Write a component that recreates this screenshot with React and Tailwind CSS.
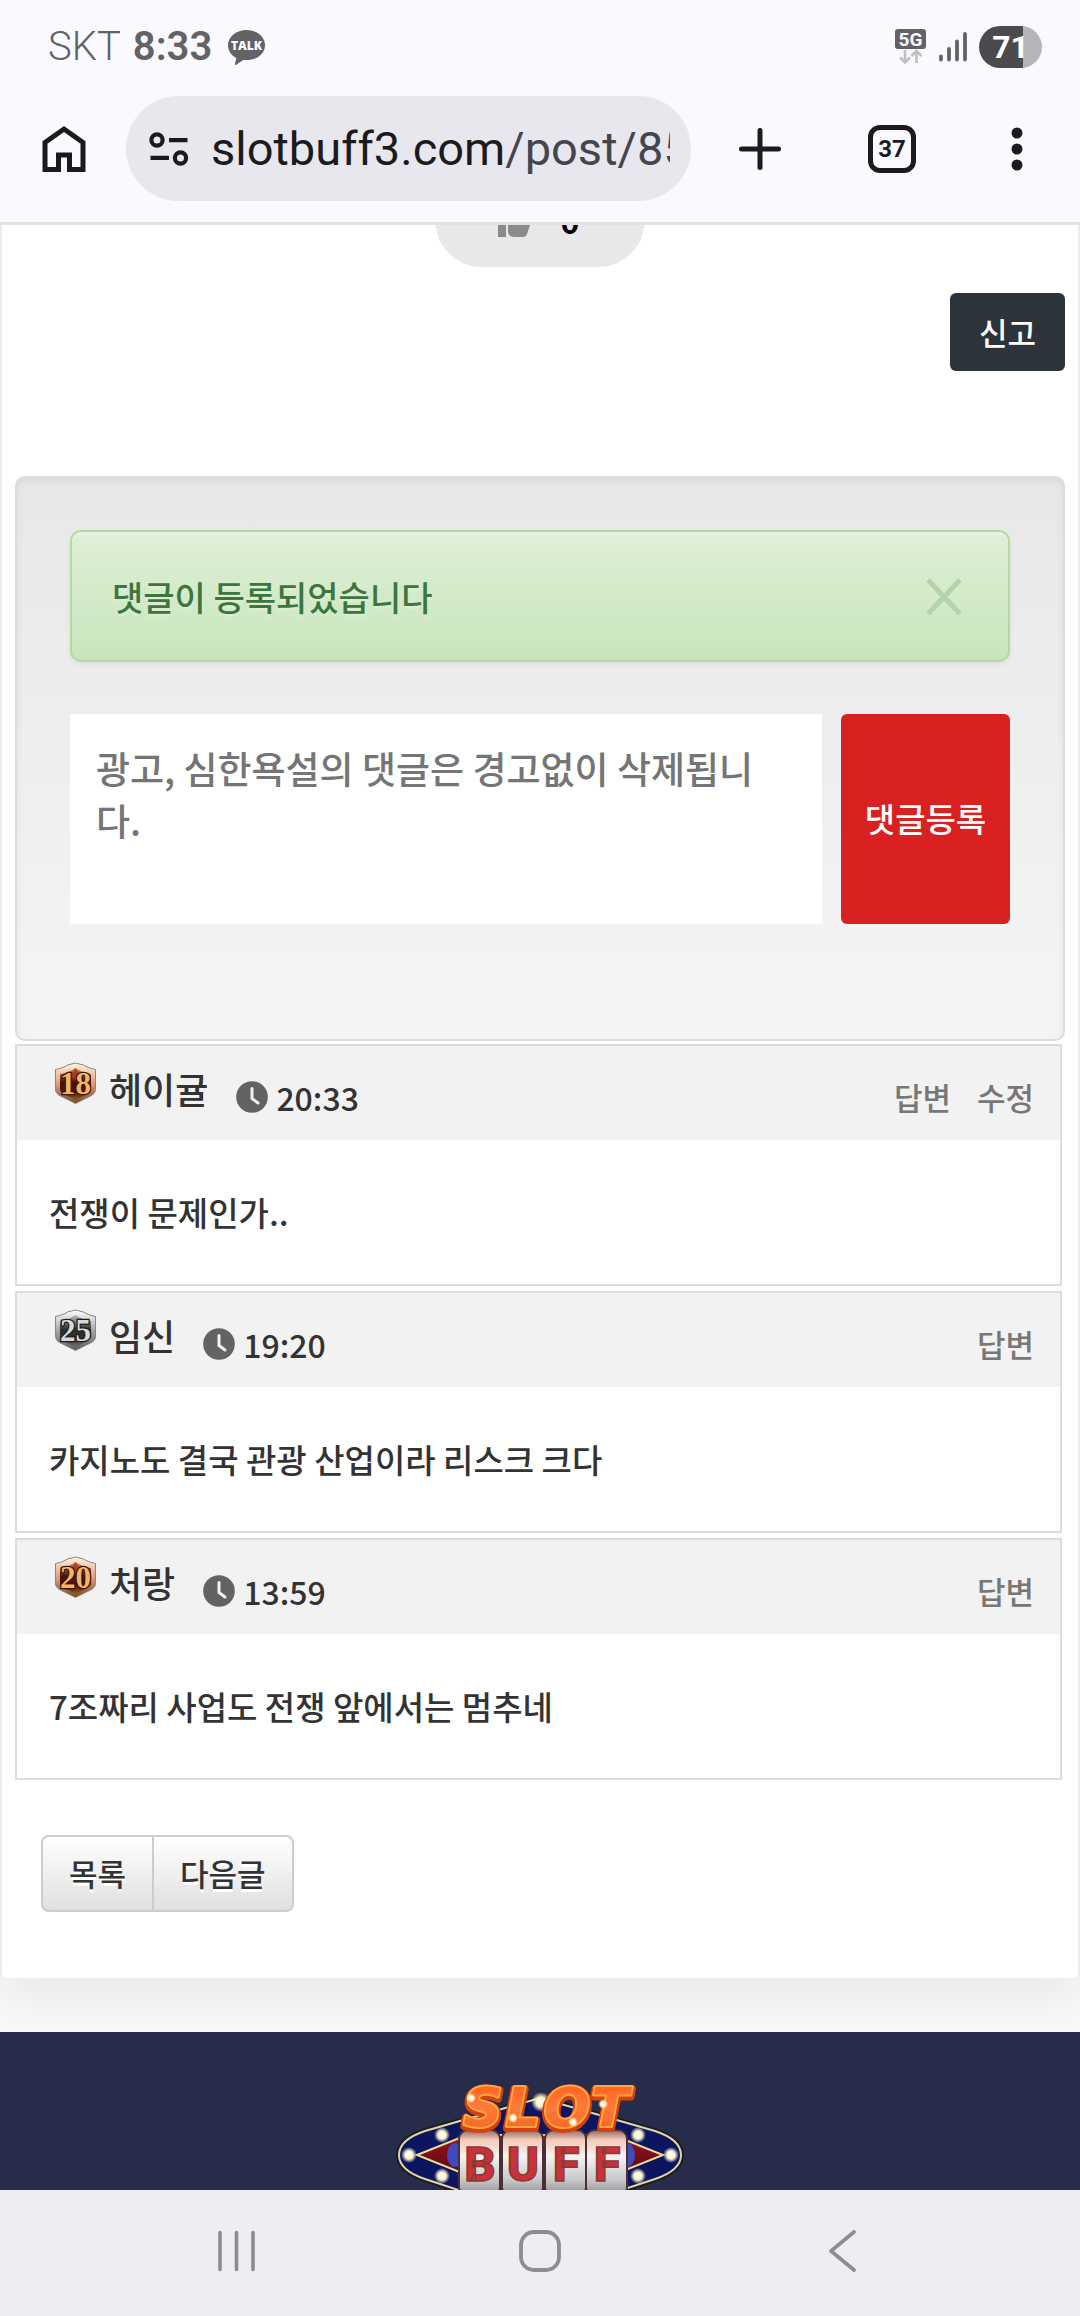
import { useState } from "react";

const comments = [
  {
    id: 1,
    level: 18,
    tier: "bronze",
    author: "헤이귤",
    time: "20:33",
    text: "전쟁이 문제인가..",
    actions: ["답변", "수정"],
  },
  {
    id: 2,
    level: 25,
    tier: "silver",
    author: "임신",
    time: "19:20",
    text: "카지노도 결국 관광 산업이라 리스크 크다",
    actions: ["답변"],
  },
  {
    id: 3,
    level: 20,
    tier: "bronze",
    author: "처랑",
    time: "13:59",
    text: "7조짜리 사업도 전쟁 앞에서는 멈추네",
    actions: ["답변"],
  },
];

const tiers = {
  bronze: {
    rim: ["#fff3e0", "#e0a080", "#7a4a1c"],
    top: "#d98a6c",
    core: "#4a1408",
    bottom: "#8a5a22",
    digit: "#f3b469",
    edge: "#3a1505",
  },
  silver: {
    rim: ["#ffffff", "#a8a8a8", "#5c5c5c"],
    top: "#bdbdbd",
    core: "#2e2e2e",
    bottom: "#6e6e6e",
    digit: "#d8d8d8",
    edge: "#1c1c1c",
  },
};

function TalkIcon() {
  return (
    <svg viewBox="0 0 37 36" className="h-9 w-[37px]">
      <path
        d="M18.500 1C8.300 1 0 7.800 0 16.200c0 5.400 3.300 10.100 8.300 12.800L6.900 35.400c-.1.500.4.800.8.500l7.500-5c1.100.2 2.200.2 3.300.2 10.200 0 18.500-6.600 18.500-14.900S28.700 1 18.500 1z"
        fill="#636266"
      />
      <text
        x="18.500"
        y="21"
        textAnchor="middle"
        fontSize="12"
        fontWeight="800"
        fontFamily="Open Sans, sans-serif"
        fill="#faf9ff"
      >
        TALK
      </text>
    </svg>
  );
}

function StatusBar() {
  return (
    <div className="flex h-24 items-center justify-between pb-0.5 pl-12 pr-[38px] text-[#636266]">
      <div className="flex items-center text-[40px] leading-[48px]">
        <span className="font-light">SKT</span>
        <span className="ml-3 font-semibold">8:33</span>
        <span className="ml-4">
          <TalkIcon />
        </span>
      </div>
      <div className="flex items-center gap-3">
        <svg viewBox="0 0 32 36" className="h-9 w-8">
          <rect x="0" y="0" width="31" height="20" rx="3" fill="#636266" />
          <text
            x="15.500"
            y="16.500"
            textAnchor="middle"
            fontSize="19"
            fontWeight="700"
            fontFamily="Roboto, sans-serif"
            fill="#faf9ff"
          >
            5G
          </text>
          <path
            d="M10 21v12M5 28.500l5 5 5-5M21.500 34V22.500M16.500 27l5-5 5 5"
            fill="none"
            stroke="#bfbec4"
            strokeWidth="2.600"
          />
        </svg>
        <svg viewBox="0 0 28 30" className="h-[30px] w-7">
          <path
            d="M2 24.500v3M10 17v10.500M18 9.500v18M26 2v25.500"
            stroke="#636266"
            strokeWidth="3.800"
            strokeLinecap="round"
          />
        </svg>
        <div className="flex h-[42px] w-[63px] items-center justify-center rounded-full bg-[linear-gradient(90deg,#4b4a4d_70%,#b5b4b9_70%)] text-[32px] font-bold leading-[42px] text-white">
          71
        </div>
      </div>
    </div>
  );
}

function Toolbar() {
  return (
    <div className="flex h-[105px] items-center pl-10 pr-[53px] text-[#1b1b1f]">
      <button aria-label="홈" className="mr-[38px]">
        <svg viewBox="0 0 48 48" className="size-12">
          <path
            d="M5 44.500V17.500L24 4l19 13.500v27H29.500V30h-11v14.500z"
            fill="none"
            stroke="currentColor"
            strokeWidth="5"
          />
        </svg>
      </button>
      <div className="flex h-full min-w-0 flex-1 items-center rounded-full bg-[#e8e7ed] pl-[23px] pr-[21px]">
        <svg viewBox="0 0 40 34" className="mr-[22px] h-[34px] w-10 shrink-0">
          <g fill="none" stroke="currentColor" strokeWidth="4.200">
            <circle cx="8" cy="8" r="5.600" />
            <circle cx="31.500" cy="26" r="5.600" />
            <path d="M20 8.200h18.500M1.500 25.800H20" />
          </g>
        </svg>
        <div className="min-w-0 flex-1 overflow-hidden whitespace-nowrap text-[47px] leading-[64px]">
          slotbuff3.com<span className="text-[#44464f]">/post/85</span>
        </div>
      </div>
      <div className="ml-12 flex w-72 items-center justify-between">
        <button aria-label="새 탭">
          <svg viewBox="0 0 42 42" className="size-[42px]">
            <path
              d="M21 2.500v37M2.500 21h37"
              stroke="currentColor"
              strokeWidth="5"
              strokeLinecap="round"
            />
          </svg>
        </button>
        <button
          aria-label="탭 37개"
          className="mr-1 flex size-12 items-center justify-center rounded-xl border-5 border-current text-[24px] font-bold leading-8"
        >
          37
        </button>
        <button aria-label="메뉴">
          <svg viewBox="0 0 20 44" className="h-11 w-5">
            <g fill="currentColor">
              <circle cx="10" cy="6" r="5.500" />
              <circle cx="10" cy="22" r="5.500" />
              <circle cx="10" cy="38" r="5.500" />
            </g>
          </svg>
        </button>
      </div>
    </div>
  );
}

function LevelBadge({ level, tier }) {
  const t = tiers[tier];
  const rim = `rim-${level}`;
  const fill = `fill-${level}`;
  return (
    <svg viewBox="0 0 42 42" className="h-[42px] w-[42px] shrink-0">
      <defs>
        <linearGradient id={rim} x1="0" y1="0" x2="0" y2="1">
          <stop offset="0" stopColor={t.rim[0]} />
          <stop offset="0.5" stopColor={t.rim[1]} />
          <stop offset="1" stopColor={t.rim[2]} />
        </linearGradient>
        <linearGradient id={fill} x1="0" y1="0" x2="0" y2="1">
          <stop offset="0" stopColor={t.top} />
          <stop offset="0.45" stopColor={t.core} />
          <stop offset="0.7" stopColor={t.core} />
          <stop offset="1" stopColor={t.bottom} />
        </linearGradient>
      </defs>
      <path
        d="M20.500 1l8 2c3 2 7 3.500 12 4.500v20c0 3-2 5-5 6.500l-15 7.500-15-7.500c-3-1.500-5-3.500-5-6.500v-20c5-1 9-2.500 12-4.500z"
        fill={`url(#${rim})`}
        stroke="#8c8580"
        strokeWidth="1"
      />
      <path
        d="M20.500 6c5 3.500 10 5 15.500 6v15c0 2-1.500 3.500-4 5l-11.500 6L9 32c-2.500-1.500-4-3-4-5V12c5.500-1 10.500-2.500 15.500-6z"
        fill={`url(#${fill})`}
      />
      <path d="M20.500 6l4 6-4 6-4-6z" fill="#a8361c" opacity={tier === "bronze" ? 0.8 : 0} />
      <text
        x="20.500"
        y="32"
        textAnchor="middle"
        fontSize="31"
        fontWeight="700"
        fontFamily="Liberation Serif, serif"
        fill={t.digit}
        stroke={t.edge}
        strokeWidth="2.500"
        paintOrder="stroke"
      >
        {level}
      </text>
    </svg>
  );
}

function ClockIcon() {
  return (
    <svg viewBox="0 0 32 32" className="size-8">
      <circle cx="16" cy="16" r="15.800" fill="#636363" />
      <path
        d="M16 7.500v10l6 4.500"
        fill="none"
        stroke="#f2f2f2"
        strokeWidth="3"
        strokeLinecap="round"
        strokeLinejoin="round"
      />
    </svg>
  );
}

function Comment({ comment }) {
  return (
    <article className="border-2 border-[#dcdcdc] bg-white">
      <header className="flex h-[94px] items-start bg-[#f2f2f2] pl-[38px] pr-[26px] pt-4 font-medium">
        <LevelBadge level={comment.level} tier={comment.tier} />
        <span className="ml-3 text-[36px] leading-[52px]">{comment.author}</span>
        <time className="ml-7 flex items-center gap-2 text-[32px] leading-[70px]">
          <ClockIcon />
          {comment.time}
        </time>
        <div className="ml-auto flex gap-[26px] text-[31px] leading-[70px] text-[#777]">
          {comment.actions.map((action) => (
            <a key={action} href="#reply">
              {action}
            </a>
          ))}
        </div>
      </header>
      <p className="flex h-36 items-center pl-8 text-[33px] font-medium leading-[48px]">
        {comment.text}
      </p>
    </article>
  );
}

function CommentForm() {
  const [text, setText] = useState("");
  const [showAlert, setShowAlert] = useState(true);

  return (
    <section className="mt-[105px] rounded-[10px] border-2 border-[#dcdcdc] bg-linear-to-b from-[#e8e8e8] to-[#f5f5f5] px-[53px] pb-[115px] pt-[52px] shadow-[inset_0_3px_9px_rgba(0,0,0,0.06)]">
      {showAlert && (
        <div
          role="alert"
          className="mb-[52px] flex h-[132px] items-center justify-between rounded-[11px] border-2 border-[#b2dba1] bg-linear-to-b from-[#dff0d8] to-[#c8e5bc] pl-10 pr-[45px] text-[#3c763d] shadow-[inset_0_3px_0_rgba(255,255,255,0.25),0_3px_6px_rgba(0,0,0,0.05)]"
        >
          <span className="text-[34px] font-medium text-shadow-[0_3px_0_rgba(255,255,255,0.2)]">
            댓글이 등록되었습니다
          </span>
          <button aria-label="닫기" onClick={() => setShowAlert(false)}>
            <svg viewBox="0 0 38 38" className="size-[38px]">
              <path
                d="M3 5l32 32M35 5L3 37"
                stroke="#ffffff"
                strokeOpacity="0.25"
                strokeWidth="4"
              />
              <path d="M3 3l32 34M35 3L3 37" stroke="#b3d2ae" strokeWidth="5" />
            </svg>
          </button>
        </div>
      )}
      <form className="flex h-[210px] gap-[19px]" onSubmit={(e) => e.preventDefault()}>
        <textarea
          aria-label="댓글"
          value={text}
          onChange={(e) => setText(e.target.value)}
          placeholder="광고, 심한욕설의 댓글은 경고없이 삭제됩니다."
          className="min-w-0 flex-1 resize-none break-all bg-white px-[26px] py-7 text-[37px] font-medium leading-[52px] placeholder:text-[#757575]"
        />
        <button
          type="submit"
          className="w-[169px] rounded-md bg-[#da2122] text-[33px] font-medium text-white"
        >
          댓글등록
        </button>
      </form>
    </section>
  );
}

function Logo() {
  return (
    <svg viewBox="0 0 290 130" className="h-[130px] w-[290px]">
      <defs>
        <linearGradient id="reel" x1="0" y1="0" x2="0" y2="1">
          <stop offset="0" stopColor="#8a6a66" />
          <stop offset="0.15" stopColor="#f6c9b8" />
          <stop offset="0.4" stopColor="#f4f2f2" />
          <stop offset="0.75" stopColor="#c9c9cb" />
          <stop offset="1" stopColor="#8d8d90" />
        </linearGradient>
        <linearGradient id="slot" x1="0" y1="0" x2="0" y2="1">
          <stop offset="0" stopColor="#ff5a1c" />
          <stop offset="0.5" stopColor="#ff7a3a" />
          <stop offset="1" stopColor="#f4601c" />
        </linearGradient>
        <linearGradient id="wedge" x1="0" y1="0" x2="0" y2="1">
          <stop offset="0" stopColor="#9c1420" />
          <stop offset="1" stopColor="#5a0610" />
        </linearGradient>
        <radialGradient id="bulb">
          <stop offset="0" stopColor="#ffffff" />
          <stop offset="0.5" stopColor="#fbf3c8" />
          <stop offset="1" stopColor="#fbf3c8" stopOpacity="0" />
        </radialGradient>
      </defs>

      {/* marquee frame */}
      <path
        d="M145 20L30 53C12 59 4 67 4 77s8 18 26 24l115 38 115-38c18-6 26-14 26-24s-8-18-26-24z"
        fill="#0b1248"
        stroke="#1a1a2a"
        strokeWidth="6"
      />
      <path
        d="M145 20L30 53C12 59 4 67 4 77s8 18 26 24l115 38 115-38c18-6 26-14 26-24s-8-18-26-24z"
        fill="#0c1660"
        stroke="#e3d7a0"
        strokeWidth="2"
      />
      <path
        d="M22 77l50-20h146l50 20-50 20H72z"
        fill="url(#wedge)"
        stroke="#e8dc9c"
        strokeWidth="2"
      />
      <ellipse cx="60" cy="77" rx="8" ry="12" fill="#3c4cc0" />
      <ellipse cx="232" cy="77" rx="8" ry="12" fill="#3c4cc0" />
      {[
        [14, 77],
        [47, 57],
        [47, 98],
        [276, 77],
        [243, 57],
        [243, 98],
      ].map(([x, y]) => (
        <circle key={`${x}-${y}`} cx={x} cy={y} r="8" fill="url(#bulb)" />
      ))}

      {/* reels */}
      {[
        [85, "B"],
        [128, "U"],
        [171, "F"],
        [212, "F"],
      ].map(([x, letter], i) => (
        <g key={i}>
          <rect
            x={x - 21}
            y="52"
            width="41"
            height="66"
            rx="9"
            fill="url(#reel)"
            stroke="#4a3036"
            strokeWidth="2"
          />
          <text
            x={x}
            y="103"
            textAnchor="middle"
            fontSize="48"
            fontWeight="900"
            fontFamily="Roboto, sans-serif"
            fill="#c8323a"
            stroke="#8a3a34"
            strokeWidth="1.500"
          >
            {letter}
          </text>
        </g>
      ))}

      <circle cx="146" cy="24" r="10" fill="url(#bulb)" />
      <g
        textAnchor="middle"
        fontSize="54"
        fontWeight="700"
        fontStyle="italic"
        fontFamily="DejaVu Sans, sans-serif"
        strokeLinejoin="round"
        paintOrder="stroke"
      >
        {[
          [88, "S"],
          [128, "L"],
          [172, "O"],
          [215, "T"],
        ].map(([x, letter]) => (
          <g key={letter}>
            <text x={x} y="50" fill="#d8400c" stroke="#d8400c" strokeWidth="8">
              {letter}
            </text>
            <text x={x} y="48" fill="url(#slot)" stroke="#ffa63c" strokeWidth="4">
              {letter}
            </text>
          </g>
        ))}
      </g>
      {[
        [76, 20],
        [118, 40],
        [178, 44],
        [208, 26],
      ].map(([x, y]) => (
        <circle key={x} cx={x} cy={y} r="5" fill="url(#bulb)" />
      ))}
    </svg>
  );
}

function SystemNav() {
  return (
    <nav className="flex h-[126px] items-center justify-between bg-[#eeedf2] px-[216px] pb-1 text-[#8d8c91]">
      <button aria-label="최근 앱">
        <svg viewBox="0 0 42 42" className="size-[42px]">
          <path
            d="M4 2.500v37M20.500 2.500v37M37 2.500v37"
            stroke="currentColor"
            strokeWidth="3.600"
            strokeLinecap="round"
          />
        </svg>
      </button>
      <button aria-label="홈 화면">
        <svg viewBox="0 0 42 42" className="size-[42px]">
          <rect
            x="2"
            y="2"
            width="38"
            height="38"
            rx="13"
            fill="none"
            stroke="currentColor"
            strokeWidth="3.800"
          />
        </svg>
      </button>
      <button aria-label="뒤로">
        <svg viewBox="0 0 42 42" className="size-[42px]">
          <path
            d="M32 2L9 21l23 19"
            fill="none"
            stroke="currentColor"
            strokeWidth="3.600"
            strokeLinecap="round"
            strokeLinejoin="round"
          />
        </svg>
      </button>
    </nav>
  );
}

export default function App() {
  return (
    <div className="min-h-screen bg-[#f8f8f8] font-['Noto_Sans_CJK_KR',sans-serif] text-[#333]">
      <div className="relative z-10 border-b-3 border-[#e2e1e6] bg-[#faf9ff] pb-[21px] font-[Roboto,sans-serif]">
        <StatusBar />
        <Toolbar />
      </div>

      <main className="rounded-b-md border-x-2 border-[#ececec] bg-white px-[13px] pb-[66px] shadow-[0_20px_40px_rgba(0,0,0,0.06)]">
        {/* recommend button, scrolled under the toolbar */}
        <div className="flex h-[42px] items-end justify-center overflow-hidden">
          <button className="flex h-[94px] w-[210px] shrink-0 items-center justify-center gap-7 rounded-full bg-[#e8e8e8] pr-1 text-[32px] font-bold text-black">
            <svg viewBox="0 0 36 36" className="size-9">
              <path
                d="M1 15h8v20H1zM11 15L19 1c3 0 5 2 5 5l-2 7h11c2 0 3 2 2 4l-5 15c-1 2-2 3-4 3H17c-4 0-6-3-6-6z"
                fill="#8a8a8a"
              />
            </svg>
            0
          </button>
        </div>

        <div className="mt-[26px] flex justify-end">
          <button className="h-[78px] w-[115px] rounded-md bg-[#2c343b] text-[31px] font-medium text-white">
            신고
          </button>
        </div>

        <CommentForm />

        <section className="mr-[3px] mt-[3px] flex flex-col gap-[5px]">
          {comments.map((comment) => (
            <Comment key={comment.id} comment={comment} />
          ))}
        </section>

        <div className="ml-[26px] mt-[55px] inline-flex h-[77px] overflow-hidden rounded-lg border-2 border-[#ccc] bg-linear-to-b from-white to-[#e0e0e0] align-top text-[31px] font-medium text-shadow-[0_3px_0_#fff]">
          <a href="#list" className="flex items-center border-r-2 border-[#ccc] px-[26px]">
            목록
          </a>
          <a href="#next" className="flex items-center px-[26px]">
            다음글
          </a>
        </div>
      </main>

      <footer className="mt-[54px] flex h-[158px] justify-center overflow-hidden bg-[#262c49] pt-[46px]">
        <Logo />
      </footer>
      <SystemNav />
    </div>
  );
}
